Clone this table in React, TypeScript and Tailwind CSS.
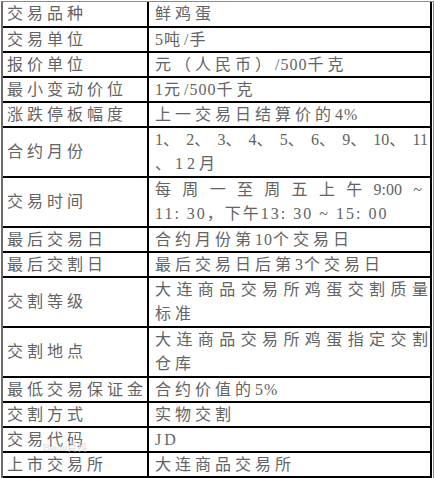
import React from "react";

type Row = { label: string; h: number; value: React.ReactNode; top?: boolean };

const T = ({ s }: { s: string }) => {
  const parts = s.match(/[\x20-\x7e]+|[^\x20-\x7e]+/g) || [];
  return (
    <>
      {parts.map((p, i) =>
        /^[\x20-\x7e]+$/.test(p) ? (
          <span key={i} className="tracking-[1px]">
            {p}
          </span>
        ) : (
          <span key={i}>{p}</span>
        )
      )}
    </>
  );
};

const Just = ({ tokens, pr = 2 }: { tokens: string[]; pr?: number }) => (
  <div className="flex justify-between h-[25px] items-center tracking-normal" style={{ paddingRight: pr }}>
    {tokens.map((t, i) => (
      <span key={i}>{t}</span>
    ))}
  </div>
);

const rows: Row[] = [
  { label: "交易品种", h: 26, value: <T s="鲜鸡蛋" /> },
  { label: "交易单位", h: 25, value: <T s="5吨/手" /> },
  { label: "报价单位", h: 25, value: <T s="元（人民币）/500千克" /> },
  { label: "最小变动价位", h: 25, value: <T s="1元/500千克" /> },
  { label: "涨跌停板幅度", h: 25, value: <T s="上一交易日结算价的4%" /> },
  {
    label: "合约月份",
    h: 50,
    top: true,
    value: (
      <>
        <Just tokens={["1、", "2、", "3、", "4、", "5、", "6、", "9、", "10、", "11"]} />
        <div className="h-[25px] flex items-center">、12月</div>
      </>
    ),
  },
  {
    label: "交易时间",
    h: 50,
    top: true,
    value: (
      <>
        <Just pr={8} tokens={["每", "周", "一", "至", "周", "五", "上", "午", "9:00", "~"]} />
        <div className="h-[25px] flex items-center tracking-[2px]">11: 30，下午13: 30 ~ 15: 00</div>
      </>
    ),
  },
  { label: "最后交易日", h: 25, value: <T s="合约月份第10个交易日" /> },
  { label: "最后交割日", h: 25, value: <T s="最后交易日后第3个交易日" /> },
  {
    label: "交割等级",
    h: 50,
    top: true,
    value: (
      <>
        <Just tokens={"大连商品交易所鸡蛋交割质量".split("")} />
        <div className="h-[25px] flex items-center">标准</div>
      </>
    ),
  },
  {
    label: "交割地点",
    h: 50,
    top: true,
    value: (
      <>
        <Just tokens={"大连商品交易所鸡蛋指定交割".split("")} />
        <div className="h-[25px] flex items-center">仓库</div>
      </>
    ),
  },
  { label: "最低交易保证金", h: 25, value: <T s="合约价值的5%" /> },
  { label: "交割方式", h: 25, value: <T s="实物交割" /> },
  { label: "交易代码", h: 25, value: <span className="tracking-[3px]">JD</span> },
  { label: "上市交易所", h: 25, value: <T s="大连商品交易所" /> },
];

export default function App() {
  return (
    <div
      className="w-[434px] h-[478px] bg-white pt-px pl-px text-[#636363] text-[16px] leading-none"
      style={{ fontFamily: '"Liberation Serif", "Noto Sans CJK SC", serif' }}
    >
      <div className="w-[433px] h-[477px] border-t border-t-[#8c8c8c] border-l-2 border-l-[#6b6b6b] border-r border-r-[#8c8c8c] pr-px relative">
        <div className="w-[429px] border-r-2 border-black">
          {rows.map((r, i) => (
            <div
              key={i}
              className="flex border-b-2 border-black box-border"
              style={{ height: r.h }}
            >
              <div className="w-[146px] shrink-0 border-r-2 border-black pl-[4px] flex items-center tracking-[4px] whitespace-nowrap overflow-hidden">
                {r.label}
              </div>
              <div
                className={
                  "flex-1 min-w-0 overflow-hidden pl-[6px] tracking-[4px] whitespace-nowrap " +
                  (r.top ? "flex flex-col" : "flex items-center")
                }
              >
                {r.value}
              </div>
            </div>
          ))}
        </div>
        <div className="absolute left-[40px] top-[441px] text-[#dadada] text-[10px] leading-none tracking-normal pointer-events-none">
          Baidu百科
        </div>
      </div>
    </div>
  );
}
